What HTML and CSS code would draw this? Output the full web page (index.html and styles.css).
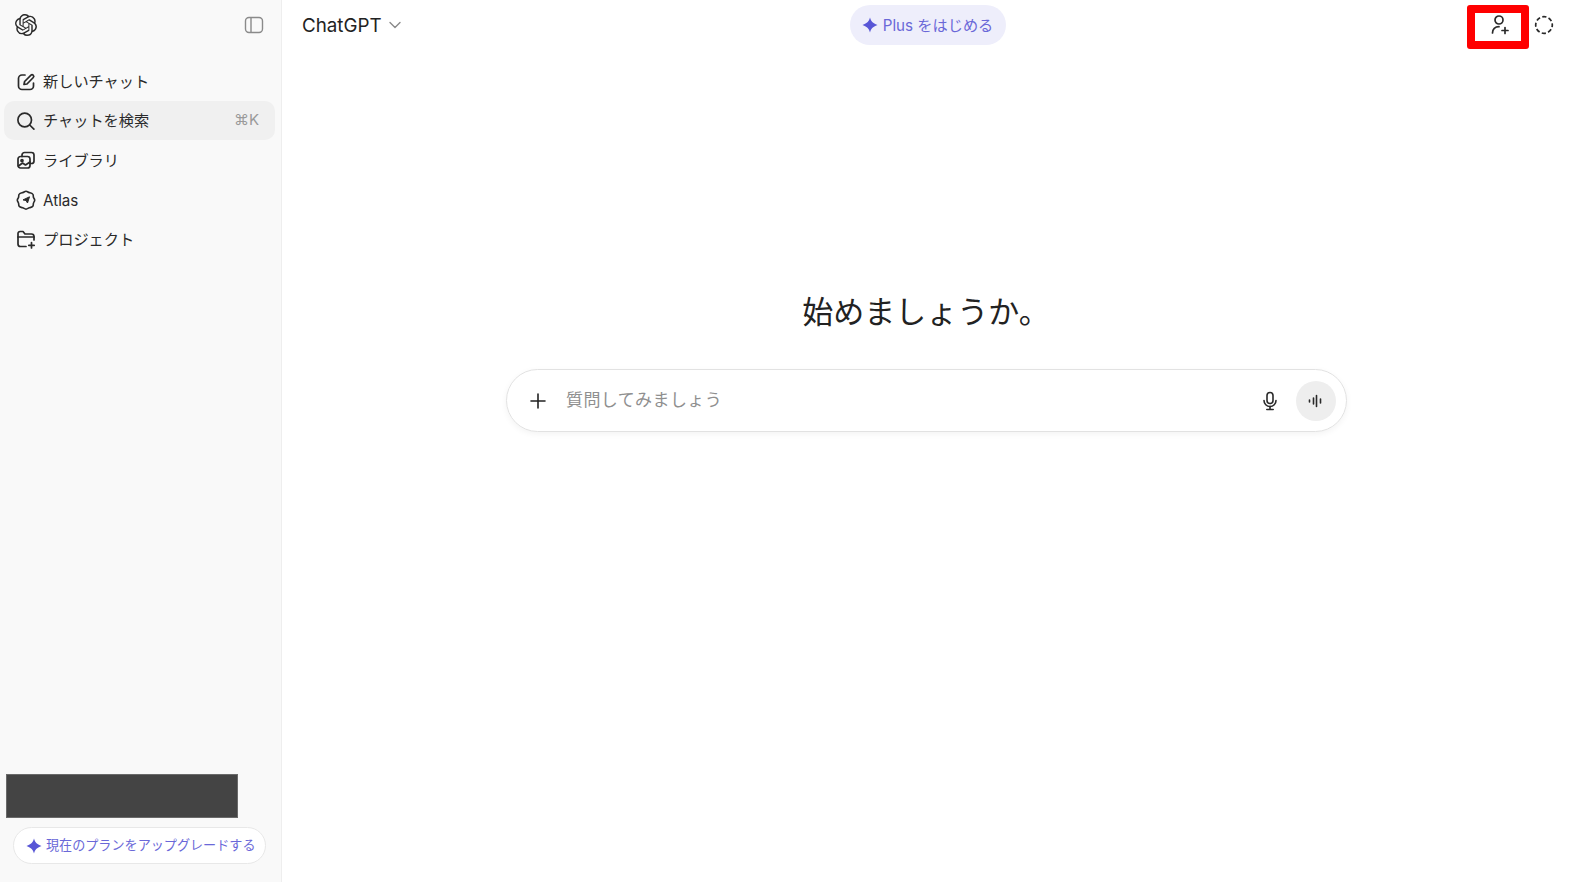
FILE: index.html
```html
<!DOCTYPE html>
<html lang="ja">
<head>
    <meta charset="UTF-8">
    <meta name="viewport" content="width=device-width, initial-scale=1.0">
    <title>ChatGPT</title>
    <link rel="stylesheet" href="styles.css">
</head>
<body>
    <aside class="sidebar">
        <div class="side-top">
            <svg class="logo" width="22" height="22" viewBox="0 0 24 24"><path fill="#2a2a2a" d="M22.2819 9.8211a5.9847 5.9847 0 0 0-.5157-4.9108 6.0462 6.0462 0 0 0-6.5098-2.9A6.0651 6.0651 0 0 0 4.9807 4.1818a5.9847 5.9847 0 0 0-3.9977 2.9 6.0462 6.0462 0 0 0 .7427 7.0966 5.98 5.98 0 0 0 .511 4.9107 6.051 6.051 0 0 0 6.5146 2.9001A5.9847 5.9847 0 0 0 13.2599 24a6.0557 6.0557 0 0 0 5.7718-4.2058 5.9894 5.9894 0 0 0 3.9977-2.9001 6.0557 6.0557 0 0 0-.7475-7.0729zm-9.022 12.6081a4.4755 4.4755 0 0 1-2.8764-1.0408l.1419-.0804 4.7783-2.7582a.7948.7948 0 0 0 .3927-.6813v-6.7369l2.02 1.1686a.071.071 0 0 1 .038.052v5.5826a4.504 4.504 0 0 1-4.4945 4.4944zm-9.6607-4.1254a4.4708 4.4708 0 0 1-.5346-3.0137l.142.0852 4.783 2.7582a.7712.7712 0 0 0 .7806 0l5.8428-3.3685v2.3324a.0804.0804 0 0 1-.0332.0615L9.74 19.9502a4.4992 4.4992 0 0 1-6.1408-1.6464zM2.3408 7.8956a4.485 4.485 0 0 1 2.3655-1.9728V11.6a.7664.7664 0 0 0 .3879.6765l5.8144 3.3543-2.0201 1.1685a.0757.0757 0 0 1-.071 0l-4.8303-2.7865A4.504 4.504 0 0 1 2.3408 7.872zm16.5963 3.8558L13.1038 8.364 15.1192 7.2a.0757.0757 0 0 1 .071 0l4.8303 2.7913a4.4944 4.4944 0 0 1-.6765 8.1042v-5.6772a.79.79 0 0 0-.407-.667zm2.0107-3.0231l-.142-.0852-4.7735-2.7818a.7759.7759 0 0 0-.7854 0L9.409 9.2297V6.8974a.0662.0662 0 0 1 .0284-.0615l4.8303-2.7866a4.4992 4.4992 0 0 1 6.6802 4.66zM8.3065 12.863l-2.02-1.1638a.0804.0804 0 0 1-.038-.0567V6.0742a4.4992 4.4992 0 0 1 7.3757-3.4537l-.142.0805L8.704 5.459a.7948.7948 0 0 0-.3927.6813zm1.0976-2.3654l2.602-1.4998 2.6069 1.4998v2.9994l-2.5974 1.4997-2.6067-1.4997Z"/></svg>
            <svg class="toggle" width="20" height="20" viewBox="0 0 20 20" fill="none" stroke="#8a8a8a" stroke-width="1.4"><rect x="1.500" y="2.500" width="17" height="15" rx="3.500"/><path d="M7 2.500v15"/></svg>
        </div>

        <nav class="side-nav">
            <a class="nav-item">
                <svg width="20" height="20" viewBox="0 0 20 20" fill="none" stroke="#2a2a2a" stroke-width="1.7" stroke-linecap="round" stroke-linejoin="round"><path d="M9 3H6a3.500 3.500 0 0 0-3.500 3.500v7.500A3.500 3.500 0 0 0 6 17.500h8a3.500 3.500 0 0 0 3.500-3.500v-3"/><path d="M8 12.500l.6-3L15 3.200a1.500 1.500 0 0 1 2.100 0l.2.2a1.500 1.500 0 0 1 0 2.100L11 12z"/></svg>
                <span>新しいチャット</span>
            </a>
            <a class="nav-item active">
                <svg width="20" height="20" viewBox="0 0 20 20" fill="none" stroke="#2a2a2a" stroke-width="1.7" stroke-linecap="round"><circle cx="8.700" cy="9" r="6.800"/><path d="M13.700 14l4.200 4.200"/></svg>
                <span>チャットを検索</span>
                <span class="shortcut">⌘K</span>
            </a>
            <a class="nav-item">
                <svg width="20" height="20" viewBox="0 0 20 20" fill="none" stroke="#2a2a2a" stroke-width="1.7" stroke-linecap="round" stroke-linejoin="round"><rect x="2" y="6.500" width="12" height="11.500" rx="2.500"/><path d="M6 6.500V5a2.500 2.500 0 0 1 2.500-2.500H15.500A2.500 2.500 0 0 1 18 5v6a2.500 2.500 0 0 1-2.500 2.500H14"/><circle cx="6" cy="10.500" r="1"/><path d="M2.500 16l4-3 3 2 4.500-3"/></svg>
                <span>ライブラリ</span>
            </a>
            <a class="nav-item">
                <svg width="20" height="20" viewBox="0 0 20 20" fill="none" stroke="#2a2a2a" stroke-width="1.6" stroke-linejoin="round"><path d="M10 1.300c1.500 0 2 1 3.300 1.300 1.400.3 2.700.3 3.500 1.500.8 1.100.3 2.300.7 3.400.3 1 1.200 1.500 1.200 2.700s-.9 1.700-1.200 2.700c-.4 1.100.1 2.300-.7 3.400-.8 1.200-2.100 1.200-3.500 1.500-1.300.3-1.800 1.300-3.300 1.300s-2-1-3.300-1.300c-1.400-.3-2.700-.3-3.500-1.500-.8-1.100-.3-2.300-.7-3.400C2.200 12 1.300 11.500 1.300 10.200s.9-1.700 1.200-2.700c.4-1.100-.1-2.300.7-3.400.8-1.200 2.100-1.200 3.500-1.500C8 2.300 8.500 1.300 10 1.300z"/><path fill="#2a2a2a" stroke-width="1" d="M13.500 6.800l-2 6.200-1.500-2.500-3-.6z"/></svg>
                <span class="latin">Atlas</span>
            </a>
            <a class="nav-item">
                <svg width="20" height="20" viewBox="0 0 20 20" fill="none" stroke="#2a2a2a" stroke-width="1.7" stroke-linecap="round" stroke-linejoin="round"><path d="M10 17.500H4.500A2.500 2.500 0 0 1 2 15V4.500A2 2 0 0 1 4 2.500h3l2 2.500h6.500A2.500 2.500 0 0 1 18 7.500V11"/><path d="M2 8h16"/><path d="M15.500 13.500v5.500M12.800 16.300h5.400"/></svg>
                <span>プロジェクト</span>
            </a>
        </nav>

        <div class="side-bottom">
            <div class="redacted"></div>
            <a class="upgrade">
                <svg width="16" height="16" viewBox="0 0 16 16"><path fill="#5856d6" d="M8 .5c1 3.900 2.600 5.500 7.500 7.500-4.900 2-6.500 3.600-7.500 7.500C7 11.600 5.400 10 .5 8 5.400 6 7 4.400 8 .5z"/></svg>
                <span>現在のプランをアップグレードする</span>
            </a>
        </div>
    </aside>

    <main class="main">
        <header class="topbar">
            <div class="model">
                <span>ChatGPT</span>
                <svg width="14" height="14" viewBox="0 0 14 14" fill="none" stroke="#8a8a8a" stroke-width="1.4" stroke-linecap="round" stroke-linejoin="round"><path d="M2 4.500L7 9.500l5-5"/></svg>
            </div>
            <a class="plus-pill">
                <svg width="16" height="16" viewBox="0 0 16 16"><path fill="#5856d6" d="M8 .5c1 3.900 2.600 5.500 7.500 7.500-4.900 2-6.500 3.600-7.500 7.500C7 11.600 5.400 10 .5 8 5.400 6 7 4.400 8 .5z"/></svg>
                <span>Plus をはじめる</span>
            </a>
            <div class="top-actions">
                <svg width="22" height="22" viewBox="0 0 22 22" fill="none" stroke="#2a2a2a" stroke-width="1.7" stroke-linecap="round"><circle cx="10" cy="6" r="4"/><path d="M3.500 19c0-4 2.500-6.300 6.500-6.300"/><path d="M16 13.500v6M13 16.500h6"/></svg>
                <svg width="20" height="20" viewBox="0 0 20 20" fill="none" stroke="#2a2a2a" stroke-width="1.7" stroke-dasharray="4.200 2.320" stroke-dashoffset="2"><circle cx="10" cy="10" r="8.300"/></svg>
            </div>
        </header>

        <section class="hero">
            <h1>始めましょうか。</h1>
            <div class="composer">
                <svg class="add" width="20" height="20" viewBox="0 0 20 20" fill="none" stroke="#222" stroke-width="1.6" stroke-linecap="round"><path d="M10 3v14M3 10h14"/></svg>
                <span class="placeholder">質問してみましょう</span>
                <svg class="mic" width="20" height="20" viewBox="0 0 20 20" fill="none" stroke="#2a2a2a" stroke-width="1.6" stroke-linecap="round"><rect x="7" y="1.500" width="6" height="11" rx="3"/><path d="M4 9.500a6 6 0 0 0 12 0"/><path d="M10 15.500v3M6.800 18.500h6.400"/></svg>
                <span class="voice">
                    <svg width="20" height="20" viewBox="0 0 20 20" fill="none" stroke="#2a2a2a" stroke-width="1.600" stroke-linecap="round"><path d="M3.500 9v2M7.500 7v6M10.500 4.500v11M14.500 8v4"/></svg>
                </span>
            </div>
        </section>

        <div class="annotation"></div>
    </main>
</body>
</html>
```

FILE: styles.css
```css
* {
    padding: 0;
    margin: 0;
    box-sizing: border-box;
}
body {
    display: flex;
    height: 882px;
    overflow: hidden;
    background-color: #fff;
    color: #222;
    font-family: 'Inter', 'Noto Sans CJK JP', sans-serif;
}
svg {
    display: block;
    flex-shrink: 0;
}

/* sidebar */
.sidebar {
    width: 282px;
    flex-shrink: 0;
    display: flex;
    flex-direction: column;
    background-color: #f9f9f9;
    border-right: 1px solid #eeeeee;
}
.side-top {
    height: 50px;
    display: flex;
    align-items: center;
    justify-content: space-between;
    padding: 0 17px 0 15px;
}
.side-nav {
    padding: 12px 6px 0 4px;
    display: flex;
    flex-direction: column;
    gap: 0.4px;
}
.nav-item {
    height: 39px;
    display: flex;
    align-items: center;
    gap: 7px;
    padding: 0 16px 0 12px;
    border-radius: 10px;
    font-size: 15.200px;
    color: #2a2a2a;
}
.nav-item span {
    margin-bottom: 3px;
}
.nav-item .latin {
    margin: 2px 0 0;
}
.nav-item.active {
    background-color: #f0f0f0;
}
.nav-item .shortcut {
    margin-left: auto;
    font-size: 15px;
    color: #9a9a9a;
}
.side-bottom {
    margin-top: auto;
    padding-bottom: 18px;
}
.redacted {
    width: 232px;
    height: 44px;
    margin-left: 6px;
    background-color: #444444;
    border: 1px solid #6a6a6a;
}
.upgrade {
    height: 37px;
    margin: 9px 15px 0 13px;
    display: flex;
    align-items: center;
    gap: 4px;
    padding-left: 12px;
    background-color: #fff;
    border: 1px solid #e8e8e8;
    border-radius: 19px;
    font-size: 13.100px;
    color: #6a68d8;
    white-space: nowrap;
}
.upgrade span {
    margin-bottom: 2px;
}

/* main */
.main {
    flex: 1;
    position: relative;
    display: flex;
    flex-direction: column;
}
.topbar {
    height: 50px;
    display: grid;
    grid-template-columns: 1fr auto 1fr;
    align-items: center;
    padding: 0 16px 0 20px;
}
.model {
    display: flex;
    align-items: center;
    gap: 6px;
    font-size: 18.800px;
    color: #222;
}
.plus-pill {
    height: 40px;
    display: flex;
    align-items: center;
    gap: 5px;
    padding: 0 13px 0 12px;
    background-color: #eeeefb;
    border-radius: 20px;
    font-size: 15.200px;
    color: #6a68d8;
}
.plus-pill span {
    margin-bottom: 2px;
}
.top-actions {
    display: flex;
    align-items: center;
    justify-content: flex-end;
    gap: 23px;
}
.hero {
    padding-top: 244px;
    display: flex;
    flex-direction: column;
    align-items: center;
}
.hero h1 {
    height: 36px;
    line-height: 36px;
    font-size: 31px;
    font-weight: 400;
    color: #222;
}
.composer {
    width: 841px;
    height: 63px;
    margin: 39px 0 0 1px;
    display: flex;
    align-items: center;
    padding: 0 10px 0 21px;
    border: 1px solid #e2e2e2;
    border-radius: 32px;
    box-shadow: 0 2px 6px rgba(0, 0, 0, 0.05);
}
.placeholder {
    margin: 0 0 5px 18px;
    flex: 1;
    font-size: 17px;
    letter-spacing: 0.4px;
    color: #8f8f8f;
}
.mic {
    margin-right: 16px;
}
.voice {
    width: 40px;
    height: 40px;
    display: flex;
    align-items: center;
    justify-content: center;
    background-color: #eeeeee;
    border-radius: 50%;
}

/* red highlight drawn over the screenshot */
.annotation {
    position: absolute;
    top: 5px;
    right: 41px;
    width: 62px;
    height: 44px;
    border: 8px solid #ff0000;
    border-radius: 3px;
}
```
